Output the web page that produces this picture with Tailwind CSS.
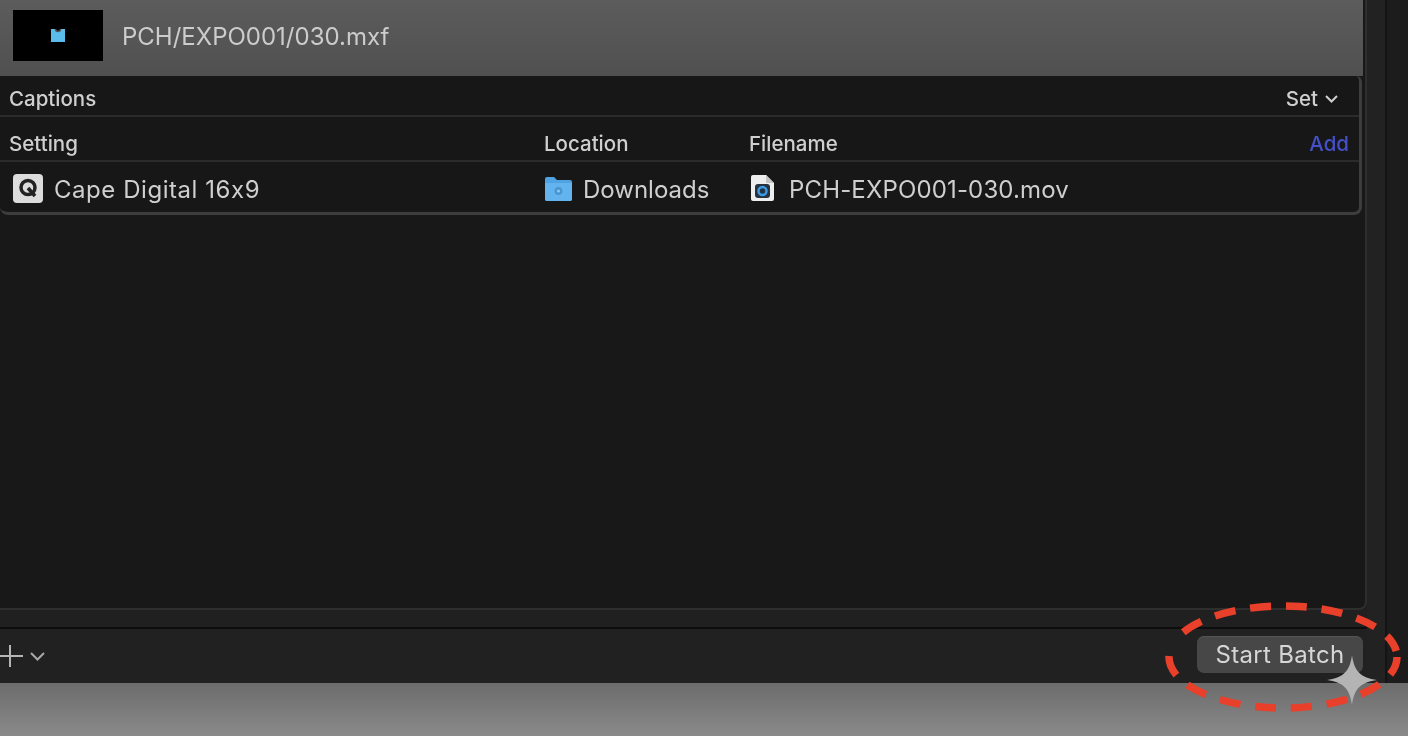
<!DOCTYPE html>
<html lang="en">

<head>
    <meta charset="UTF-8" />
    <title>Start Batch</title>
    <script src="https://cdn.jsdelivr.net/npm/@tailwindcss/browser@4"></script>
</head>

<body class="bg-[#6e6e6e]">
    <div class="relative w-[1408px] h-[736px] overflow-hidden font-['Inter','Liberation_Sans',sans-serif] [font-feature-settings:'calt'_0] text-[#cfcfcf] flex flex-col blur-[0.5px]">
        <div class="h-[683px] bg-[#1f1f1f] flex shrink-0">
            <div class="w-[1367px] shrink-0 flex flex-col">
                <!-- batch source -->
                <div class="h-[610px] bg-[#181818] border-b-2 border-r-2 border-[#2e2e2e] rounded-br-[8px] flex flex-col">
                    <div class="h-[76px] shrink-0 bg-gradient-to-b from-[#5c5c5c] to-[#505050] pl-[13px] pt-[10px] flex items-start gap-[19px] w-[1363px]">
                        <div class="w-[90px] h-[51px] bg-black flex items-center justify-center">
                            <svg width="14" height="15" viewBox="0 0 14 15">
                                <path d="M0 1h4.500a2.500 2.500 0 0 0 5 0H14v13H0z" fill="#5bbcec" />
                                <path d="M4.500 1a2.500 2.500 0 0 0 5 0" fill="none" stroke="#555555" stroke-width="1.500" />
                            </svg>
                        </div>
                        <span class="text-[24px] leading-[54px] text-[#cccccc]">PCH/EXPO001/030.mxf</span>
                    </div>
                    <div class="w-[1362px] h-[139px] bg-[#171717] rounded-b-[8px] rounded-t-[6px] border-b-[3px] border-r-[3px] border-[#3d3d3d] flex flex-col text-[20.500px] font-medium">
                        <div class="h-[41px] shrink-0 border-b-2 border-[#2b2b2b] pl-[9px] pr-[21px] pt-[7px] flex items-center justify-between">
                            <span>Captions</span>
                            <span class="flex items-center gap-[7px]">Set
                                <svg width="13" height="8" viewBox="0 0 13 8" fill="none" stroke="#cfcfcf" stroke-width="2">
                                    <path d="M1 1l5.500 5.500L12 1" />
                                </svg>
                            </span>
                        </div>
                        <div class="h-[45px] shrink-0 border-b-2 border-[#2b2b2b] pl-[9px] pr-[10px] pt-[12px] flex items-center">
                            <span class="w-[535px]">Setting</span>
                            <span class="w-[205px]">Location</span>
                            <span>Filename</span>
                            <span class="ml-auto text-[#444fc8]">Add</span>
                        </div>
                        <div class="flex-1 pl-[13px] pt-[2px] flex items-center text-[24px] font-normal">
                            <div class="w-[531px] flex items-center gap-[11px]">
                                <span class="w-[30px] h-[29px] rounded-[4px] bg-[#dcdcdc] flex items-center justify-center">
                                    <svg width="22" height="22" viewBox="0 0 22 22" fill="none" stroke="#222222" stroke-width="3.500">
                                        <circle cx="11" cy="10.500" r="7" />
                                        <path d="M11 11l7 8" />
                                    </svg>
                                </span>
                                <span class="tracking-[0.55px] pt-[4px]">Cape Digital 16x9</span>
                            </div>
                            <div class="w-[205px] flex items-center gap-[11px]">
                                <svg width="28" height="25" viewBox="0 0 28 25">
                                    <path d="M1 3a2 2 0 0 1 2-2h7l3 3h13a2 2 0 0 1 2 2v17a2 2 0 0 1-2 2H3a2 2 0 0 1-2-2z" fill="#4fa3e3" />
                                    <path d="M1 7h27v16a2 2 0 0 1-2 2H3a2 2 0 0 1-2-2z" fill="#63b4ee" />
                                    <circle cx="14.500" cy="15" r="4" fill="#4a96d2" />
                                    <circle cx="14.500" cy="15" r="1.500" fill="#8ccaf4" />
                                </svg>
                                <span class="pt-[4px]">Downloads</span>
                            </div>
                            <div class="flex items-center gap-[14px] pl-[1px]">
                                <svg width="25" height="28" viewBox="0 0 25 28">
                                    <path d="M1 3a2 2 0 0 1 2-2h13l8 8v16a2 2 0 0 1-2 2H3a2 2 0 0 1-2-2z" fill="#eeeeee" />
                                    <path d="M16 1l8 8h-8z" fill="#c4c4c4" />
                                    <rect x="5" y="10" width="15" height="14" rx="3" fill="#26323d" />
                                    <circle cx="12.500" cy="17" r="4" fill="none" stroke="#3b9ae6" stroke-width="2.500" />
                                </svg>
                                <span class="tracking-[0.15px] pt-[4px]">PCH-EXPO001-030.mov</span>
                            </div>
                        </div>
                    </div>
                </div>
                <div class="h-[19px] shrink-0 bg-[#202020] border-b-2 border-[#0d0d0d]"></div>
                <!-- toolbar -->
                <div class="flex-1 bg-[#212121] flex items-center justify-between pr-[4px]">
                    <div class="flex items-center gap-[7px]">
                        <svg width="23" height="24" viewBox="0 0 23 24" stroke="#b5b5b5" stroke-width="2" fill="none">
                            <path d="M0 12h23M10 1v22" />
                        </svg>
                        <svg width="15" height="9" viewBox="0 0 15 9" stroke="#a8a8a8" stroke-width="2" fill="none">
                            <path d="M1 1l6.500 6.500L14 1" />
                        </svg>
                    </div>
                    <button class="w-[166px] h-[37px] -mt-[4px] rounded-[7px] bg-[#474747] border-t border-[#555555] text-[#d6d6d6] text-[24px] tracking-[0.3px]">Start Batch</button>
                </div>
            </div>
            <div class="w-[18px] shrink-0 bg-[#222222]"></div>
            <div class="flex-1 bg-[#1c1c1c] border-l-2 border-[#141414]"></div>
        </div>
        <div class="flex-1 bg-gradient-to-b from-[#6c6c6c] to-[#8a8a8a]"></div>

        <!-- annotation over the screenshot -->
        <svg class="absolute left-[1160px] top-[598px]" width="248" height="118" viewBox="0 0 248 118" fill="none" stroke="#e8402a" stroke-width="7.500" stroke-dasharray="21 14.800">
            <path d="M14 44A114 51 0 0 1 236.200 53" stroke-dashoffset="272.700" />
            <path d="M237 59A114 51 0 1 1 10.800 50" stroke-dashoffset="2" />
        </svg>
        <svg class="absolute left-[1326px] top-[654px]" width="52" height="52" viewBox="0 0 52 52">
            <path d="M26 1C28 17 35 24 51 26C35 28 28 35 26 51C24 35 17 28 1 26C17 24 24 17 26 1z" fill="#b4b4b4" />
        </svg>
    </div>
</body>

</html>
